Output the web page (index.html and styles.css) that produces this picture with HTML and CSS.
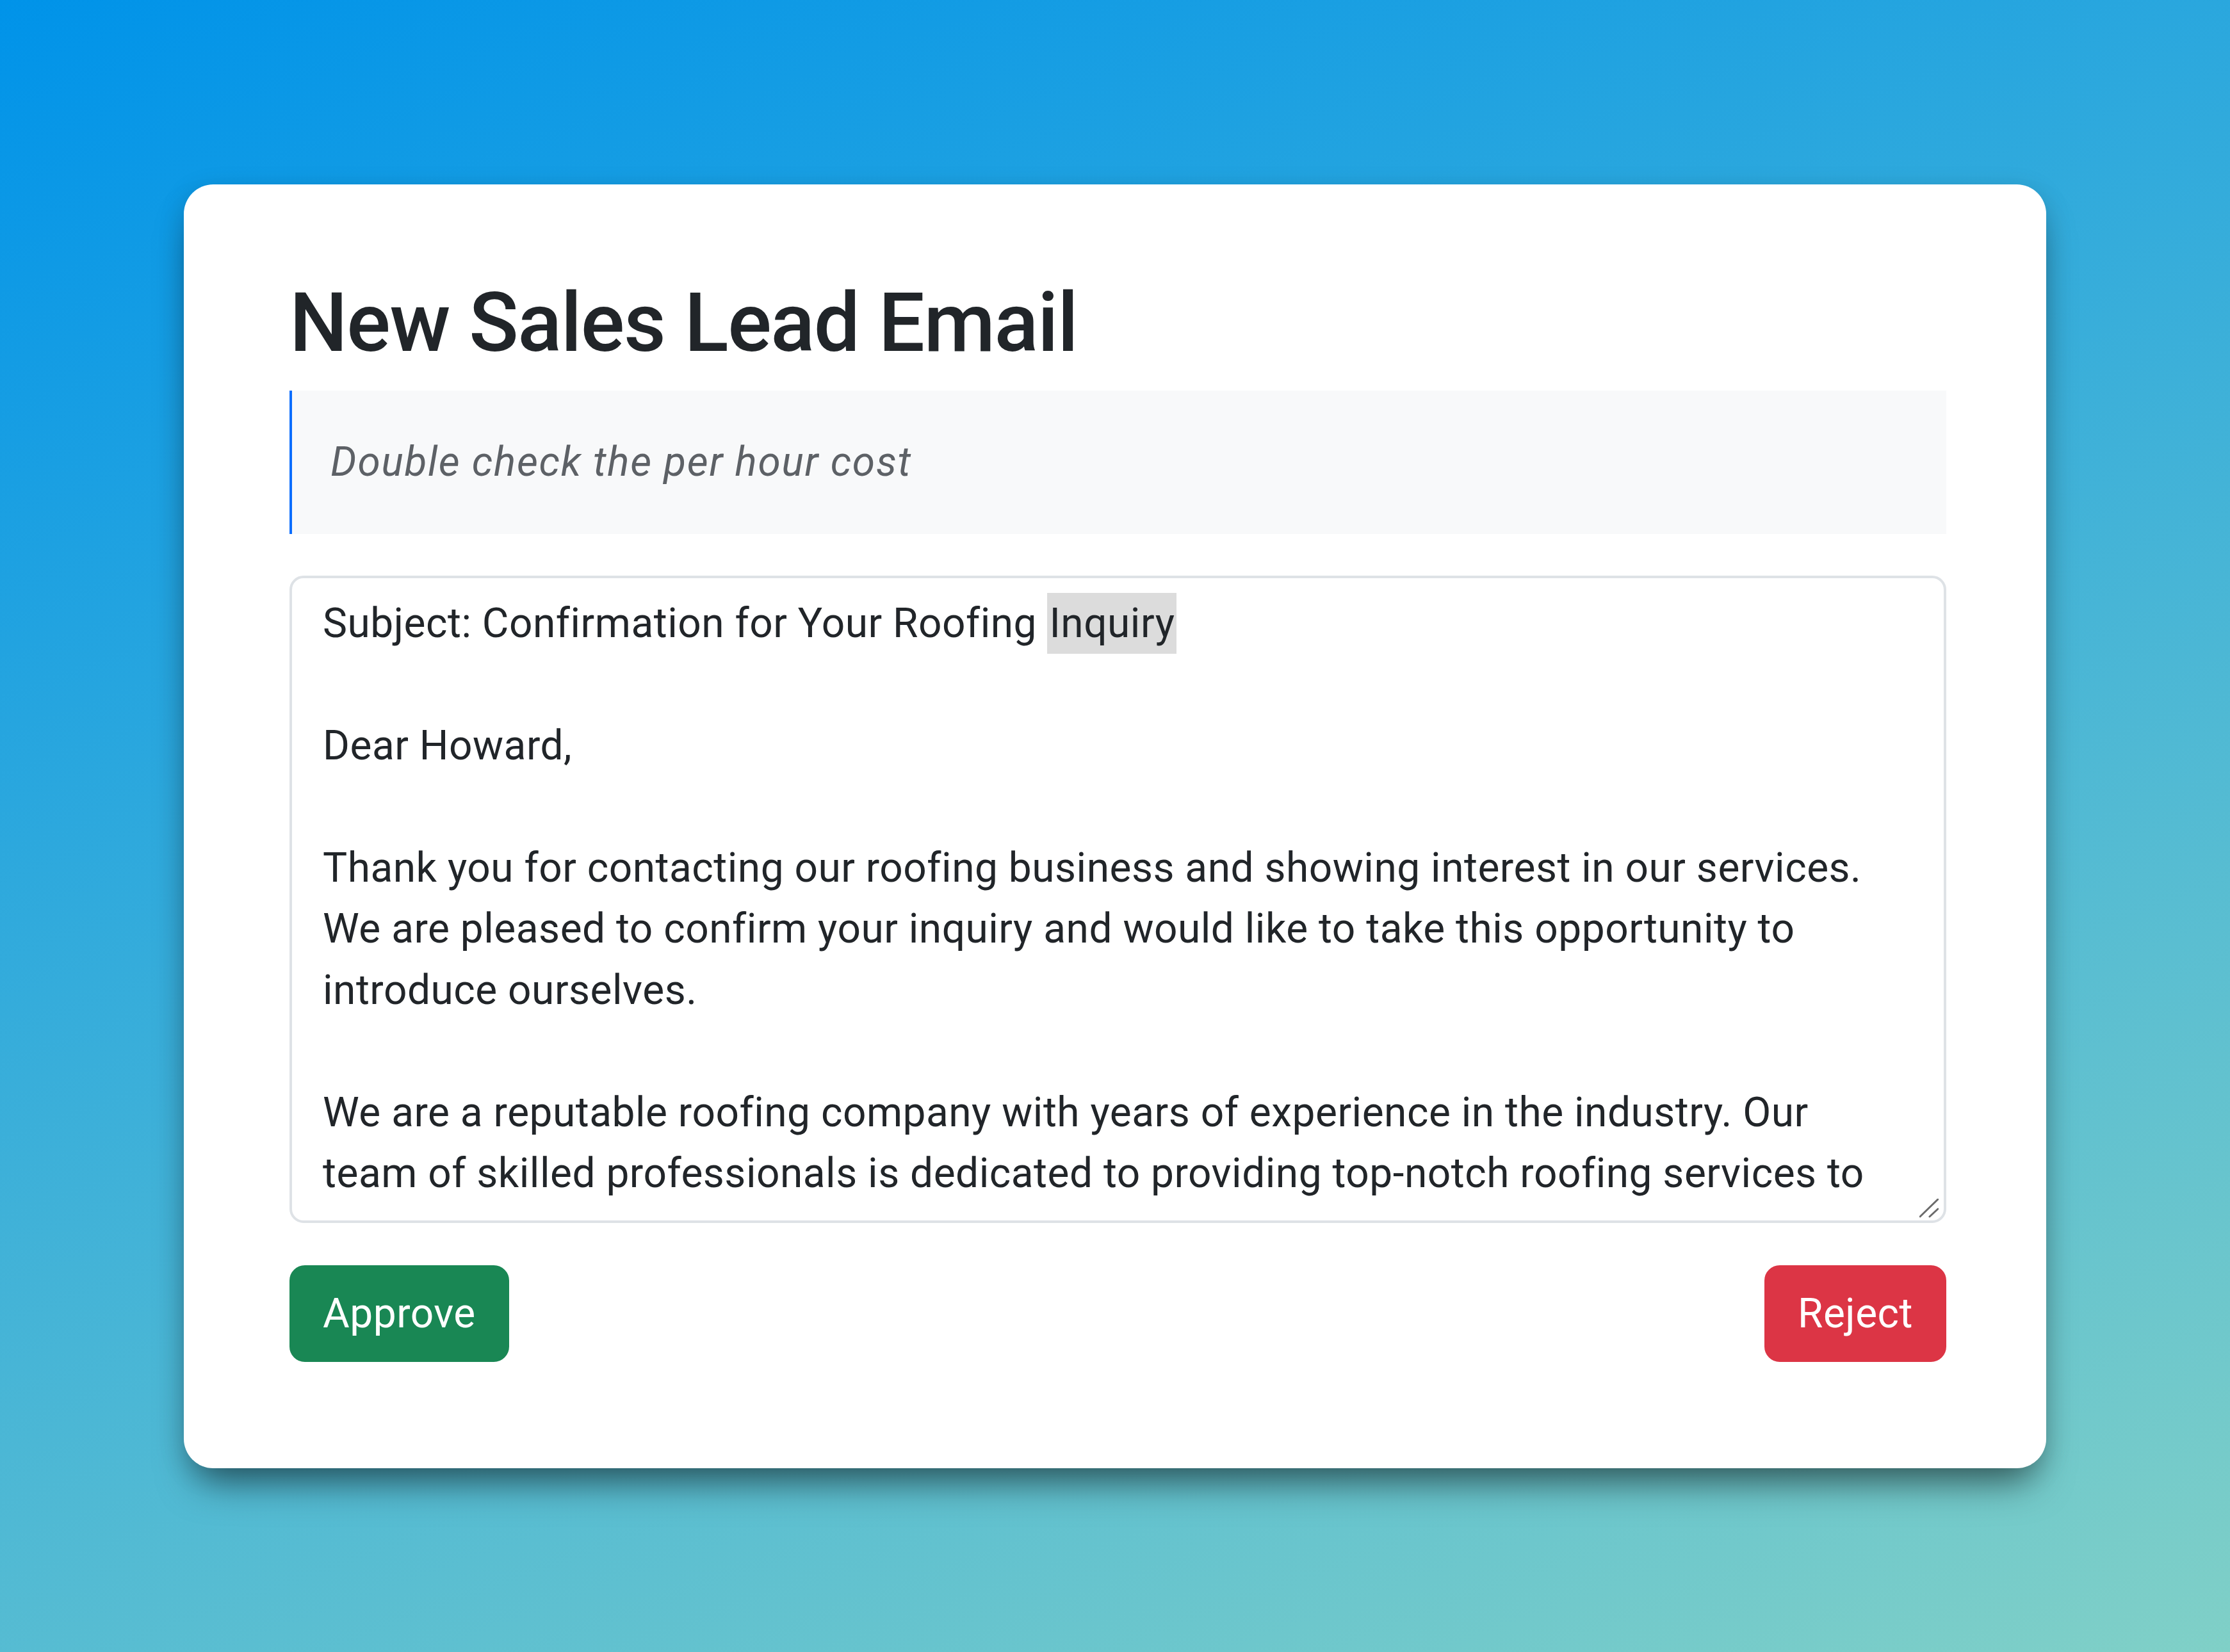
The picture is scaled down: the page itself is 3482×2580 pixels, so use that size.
FILE: index.html
```html
<!DOCTYPE html>
<html lang="en">
<head>
<meta charset="utf-8">
<title>New Sales Lead Email</title>
<link rel="stylesheet" href="styles.css">
</head>
<body>
  <main class="card">
    <h1 class="title">New Sales Lead Email</h1>
    <blockquote class="note">Double check the per hour cost</blockquote>
    <div class="editor">
      <div class="editor-text">Subject: Confirmation for Your Roofing <span class="selected">Inquiry</span>

Dear Howard,

Thank you for contacting our roofing business and showing interest in our services.
We are pleased to confirm your inquiry and would like to take this opportunity to
introduce ourselves.

We are a reputable roofing company with years of experience in the industry. Our
team of skilled professionals is dedicated to providing top-notch roofing services to</div>
      <svg class="grip" viewBox="0 0 30 30" width="30" height="30" aria-hidden="true">
        <line x1="1" y1="28" x2="29" y2="1" stroke="#6b6b6b" stroke-width="3" stroke-linecap="round"/>
        <line x1="16" y1="28" x2="29" y2="16" stroke="#6b6b6b" stroke-width="3" stroke-linecap="round"/>
      </svg>
    </div>
    <div class="actions">
      <button class="btn btn-approve" type="button">Approve</button>
      <button class="btn btn-reject" type="button">Reject</button>
    </div>
  </main>
</body>
</html>
```

FILE: styles.css
```css
* { box-sizing: border-box; }

html, body { height: 100%; }

body {
  margin: 0;
  min-height: 100vh;
  display: flex;
  align-items: center;
  justify-content: center;
  background-color: #0093E9;
  background-image: linear-gradient(160deg, #0093E9 0%, #80D0C7 100%);
  font-family: Roboto, "Liberation Sans", Arial, sans-serif;
  color: #212529;
}

.card {
  width: 2908px;
  background: #ffffff;
  border-radius: 46px;
  padding: 139px 156px 166px 165px;
  box-shadow: 0 40px 60px -20px rgba(0, 0, 0, 0.5), 0 10px 40px rgba(0, 0, 0, 0.15);
}

.title {
  margin: 0 0 29px;
  font-size: 128px;
  line-height: 154px;
  font-weight: 500;
  letter-spacing: -1.5px;
  color: #212529;
}

.note {
  margin: 0 0 65px;
  padding: 64px 60px;
  background: #f8f9fa;
  border-left: 4px solid #0d6efd;
  font-size: 64px;
  line-height: 96px;
  font-style: italic;
  letter-spacing: 1.7px;
  color: #5d6166;
}

.editor {
  position: relative;
  height: 1011px;
  border: 4px solid #dee2e6;
  border-radius: 22px;
  padding: 23px 48px;
  overflow: hidden;
}

.editor-text {
  white-space: pre;
  font-size: 64px;
  line-height: 95.5px;
  letter-spacing: 0.5px;
  color: #212529;
}

.selected {
  display: inline-block;
  background: #dcdcdc;
  padding: 0 3px;
}

.grip {
  position: absolute;
  right: 8px;
  bottom: 4px;
}

.actions {
  display: flex;
  justify-content: space-between;
  margin-top: 66px;
}

.btn {
  font-family: inherit;
  font-size: 64px;
  line-height: 95px;
  letter-spacing: 0.5px;
  padding: 24px 48px;
  border: 4px solid transparent;
  border-radius: 24px;
  color: #ffffff;
  cursor: pointer;
}

.btn-approve { background: #198754; border-color: #198754; }
.btn-reject { background: #dc3545; border-color: #dc3545; }
```
